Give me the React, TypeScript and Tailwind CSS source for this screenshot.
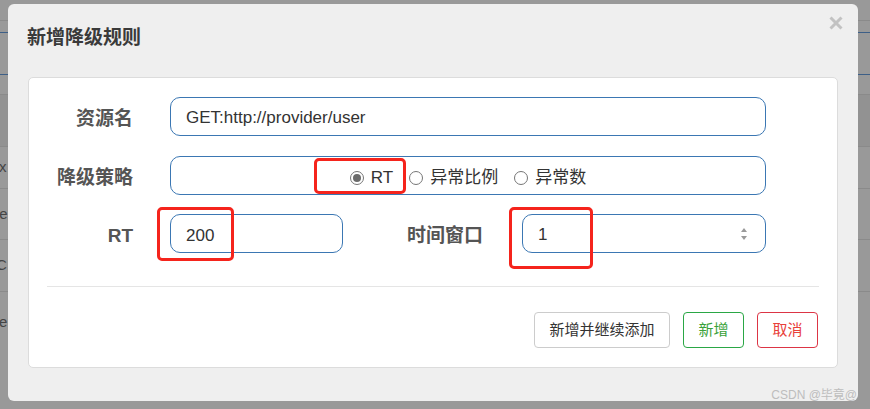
import React from 'react'

function Radio({ label, checked }: { label: string; checked?: boolean }) {
  return (
    <label className="flex items-center">
      <span className="flex h-[14px] w-[14px] items-center justify-center rounded-full border border-[#767676] bg-white">
        {checked && <span className="h-[8px] w-[8px] rounded-full bg-[#6b6b6b]" />}
      </span>
      <span className="ml-[7px] text-[17px] leading-none text-[#333]">{label}</span>
    </label>
  )
}

function Mark({ className }: { className: string }) {
  return <div className={'pointer-events-none absolute rounded-[5px] border-[3px] border-[#f5241c] ' + className} />
}

export default function App() {
  return (
    <div className="relative h-[409px] w-[870px] overflow-hidden bg-[#999999] font-['Liberation_Sans','Noto_Sans_CJK_SC',sans-serif]">

      {/* page behind the overlay */}
      <div className="flex flex-col">
        <div className="h-[21px] border-b border-[#8a8a8a]" />
        <div className="h-[12px] border-b border-[#3d5f87]" />
        <div className="h-[42px] border-b border-[#3d5f87]" />
        <div className="h-[20px] border-b border-[#8a8a8a]" />
        <div className="h-[52px] border-b border-[#8a8a8a] bg-[#929292]" />
        <div className="flex h-[42px] items-center border-b border-[#8a8a8a] text-[15px] text-[#444]">
          <span className="-ml-[1px]">x</span>
        </div>
        <div className="flex h-[51px] items-center border-b border-[#8a8a8a] text-[15px] text-[#444]">
          <span className="-ml-[9px]">ne</span>
        </div>
        <div className="flex h-[52px] items-center border-b border-[#8a8a8a] text-[15px] text-[#444]">
          <span className="-ml-[4px]">C</span>
        </div>
        <div className="flex h-[60px] items-center text-[15px] text-[#444]">
          <span className="-ml-[1px]">e</span>
        </div>
      </div>

      {/* modal */}
      <div className="absolute left-[8px] top-[4px] flex h-[397px] w-[850px] flex-col rounded-[6px] bg-[#efefef]">
        <div className="relative h-[73px] pl-[19px] pt-[20px]">
          <h1 className="text-[19px] font-bold leading-[27px] text-[#3a3a3a]">新增降级规则</h1>
          <button className="absolute right-[15px] top-[12px]">
            <svg width="14" height="14" viewBox="0 0 14 14">
              <path d="M1.5 1.5 L12.5 12.5 M12.5 1.5 L1.5 12.5" stroke="#c2c2c2" strokeWidth="3" />
            </svg>
          </button>
        </div>

        <div className="ml-[20px] flex h-[291px] w-[810px] flex-col rounded-[5px] border border-[#dcdcdc] bg-white px-[18px] pt-[19px]">

          {/* 资源名 */}
          <div className="flex items-center">
            <div className="w-[123px] pr-[37px] pt-[5px] text-right text-[19px] font-bold text-[#555]">资源名</div>
            <div className="flex h-[39px] w-[596px] items-center rounded-[10px] border border-[#3b77b3] px-[15px] pt-[3px] text-[17px] text-[#333]">
              GET:http://provider/user
            </div>
          </div>

          {/* 降级策略 */}
          <div className="mt-[20px] flex items-center">
            <div className="w-[123px] pr-[37px] pt-[5px] text-right text-[19px] font-bold text-[#555]">降级策略</div>
            <div className="flex h-[39px] w-[596px] items-center justify-center gap-[16px] rounded-[10px] border border-[#3b77b3] pt-[4px]">
              <Radio label="RT" checked />
              <Radio label="异常比例" />
              <Radio label="异常数" />
            </div>
          </div>

          {/* RT / 时间窗口 */}
          <div className="mt-[19px] flex items-center">
            <div className="w-[123px] pr-[37px] pt-[6px] text-right text-[19px] font-bold text-[#555]">RT</div>
            <div className="flex h-[39px] w-[173px] items-center rounded-[10px] border border-[#3b77b3] px-[15px] pt-[4px] text-[17px] text-[#333]">
              200
            </div>
            <div className="w-[179px] pr-[39px] pt-[6px] text-right text-[19px] font-bold text-[#555]">时间窗口</div>
            <div className="flex h-[39px] w-[244px] items-center justify-between rounded-[10px] border border-[#3b77b3] pl-[15px] pr-[18px] text-[17px] text-[#333]">
              <span className="pt-[3px]">1</span>
              <span className="flex flex-col items-center gap-[4px]">
                <span className="h-0 w-0 border-x-[3px] border-b-[4px] border-x-transparent border-b-[#9a9a9a]" />
                <span className="h-0 w-0 border-x-[3px] border-t-[4px] border-x-transparent border-t-[#9a9a9a]" />
              </span>
            </div>
          </div>

          <div className="mt-[33px] h-px bg-[#e5e5e5]" />

          <div className="mt-[25px] flex justify-end gap-[13px] pr-[1px]">
            <button className="h-[36px] w-[136px] rounded-[4px] border border-[#cccccc] bg-white text-[15px] text-[#333]">
              新增并继续添加
            </button>
            <button className="h-[36px] w-[61px] rounded-[4px] border border-[#2aa745] bg-white text-[15px] text-[#3aa23a]">
              新增
            </button>
            <button className="h-[36px] w-[61px] rounded-[4px] border border-[#dc3545] bg-white text-[15px] text-[#e8403a]">
              取消
            </button>
          </div>
        </div>
      </div>

      {/* annotation boxes */}
      <Mark className="left-[314px] top-[158px] h-[36px] w-[92px]" />
      <Mark className="left-[157px] top-[207px] h-[54px] w-[77px]" />
      <Mark className="left-[509px] top-[207px] h-[62px] w-[84px]" />

      <div className="absolute bottom-[8px] right-[13px] text-[12px] leading-none text-[#bdbdbd]">CSDN @毕竟@</div>
    </div>
  )
}
